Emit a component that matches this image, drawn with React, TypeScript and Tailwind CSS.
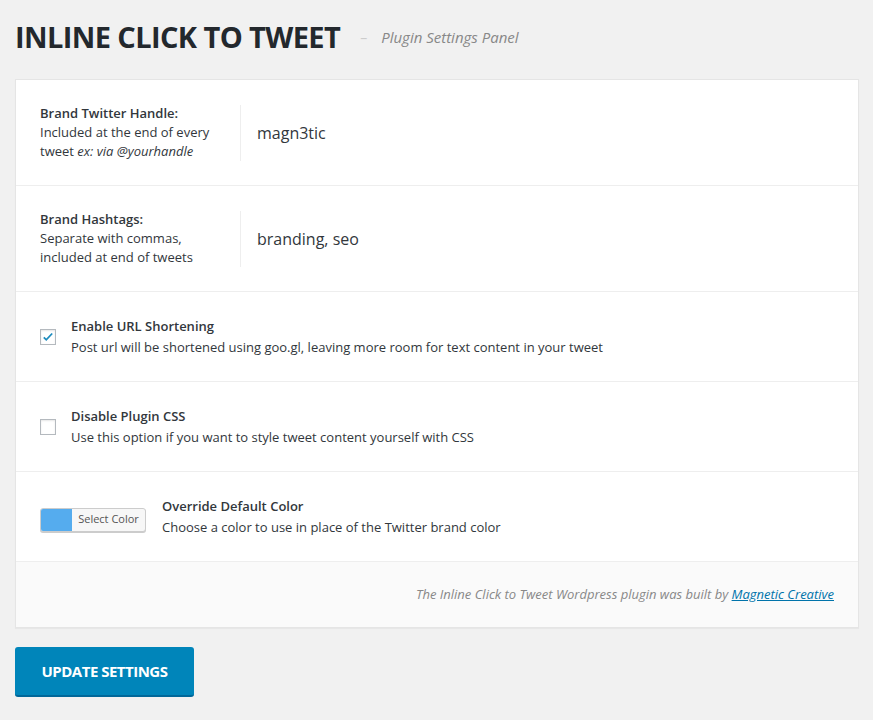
import React from "react";

const font = { fontFamily: '"Open Sans", "Liberation Sans", sans-serif' };

function TextRow({ title, desc, value }: { title: string; desc: React.ReactNode; value: string }) {
  return (
    <div className="flex h-[106px] items-center border-b border-[#eeeeee] pl-[24px]">
      <div className="w-[200px] pr-[16px] text-[13px] leading-[19px] text-[#32373c]">
        <div className="font-semibold">{title}</div>
        <div>{desc}</div>
      </div>
      <div className="flex h-[56px] items-center border-l border-[#eeeeee] pl-[16px] text-[16px] text-[#32373c]">
        {value}
      </div>
    </div>
  );
}

function CheckRow({ checked, title, desc }: { checked: boolean; title: string; desc: string }) {
  return (
    <div className="flex h-[90px] items-center border-b border-[#eeeeee] pl-[24px]">
      <div className="flex h-[16px] w-[16px] items-center justify-center border border-[#b4b9be] bg-white shadow-[inset_0_1px_2px_rgba(0,0,0,0.1)]">
        {checked && (
          <svg width="14" height="14" viewBox="0 0 20 20">
            <path d="M4 10.5l3.5 3.5L16 5" fill="none" stroke="#1e8cbe" strokeWidth="2.6" />
          </svg>
        )}
      </div>
      <div className="ml-[15px] text-[13px] text-[#32373c]">
        <div className="font-semibold leading-[21px]">{title}</div>
        <div className="leading-[21px]">{desc}</div>
      </div>
    </div>
  );
}

export default function App() {
  return (
    <div className="min-h-[720px] bg-[#f1f1f1] px-[15px] pt-[17px]" style={font}>
      <div className="flex items-center">
        <h1 className="text-[29px] font-bold leading-[40px] tracking-[-0.6px] text-[#23282d]">INLINE CLICK TO TWEET</h1>
        <span className="ml-[20px] text-[14px] text-[#cccccc]">–</span>
        <span className="ml-[14px] text-[15px] italic text-[#888888]">Plugin Settings Panel</span>
      </div>

      <div className="mt-[22px] w-[844px] border border-[#e5e5e5] bg-white shadow-[0_1px_1px_rgba(0,0,0,0.04)]">
        <TextRow
          title="Brand Twitter Handle:"
          desc={<>Included at the end of every tweet <em>ex: via @yourhandle</em></>}
          value="magn3tic"
        />
        <TextRow
          title="Brand Hashtags:"
          desc={<>Separate with commas, included at end of tweets</>}
          value="branding, seo"
        />
        <CheckRow
          checked
          title="Enable URL Shortening"
          desc="Post url will be shortened using goo.gl, leaving more room for text content in your tweet"
        />
        <CheckRow
          checked={false}
          title="Disable Plugin CSS"
          desc="Use this option if you want to style tweet content yourself with CSS"
        />
        <div className="flex h-[90px] items-center border-b border-[#eeeeee] pl-[24px]">
          <div className="mt-[6px] flex h-[24px] w-[106px] overflow-hidden rounded-[3px] border border-[#cccccc] bg-[#f7f7f7] shadow-[0_1px_0_#cccccc]">
            <div className="w-[31px] bg-[#55acee]" />
            <div className="flex flex-1 items-center justify-center text-[11px] text-[#555555]">Select Color</div>
          </div>
          <div className="ml-[16px] text-[13px] text-[#32373c]">
            <div className="font-semibold leading-[21px]">Override Default Color</div>
            <div className="leading-[21px]">Choose a color to use in place of the Twitter brand color</div>
          </div>
        </div>
        <div className="flex h-[65px] items-center justify-end bg-[#fafafa] pr-[24px] text-[13px] italic text-[#888888]">
          The Inline Click to Tweet Wordpress plugin was built by&nbsp;
          <a className="text-[#0073aa] underline" href="#">Magnetic Creative</a>
        </div>
      </div>

      <button className="mt-[19px] h-[50px] w-[179px] rounded-[3px] border-b-2 border-[#006799] bg-[#0085ba] text-[15px] font-bold tracking-[-0.5px] text-white">
        UPDATE SETTINGS
      </button>
    </div>
  );
}
